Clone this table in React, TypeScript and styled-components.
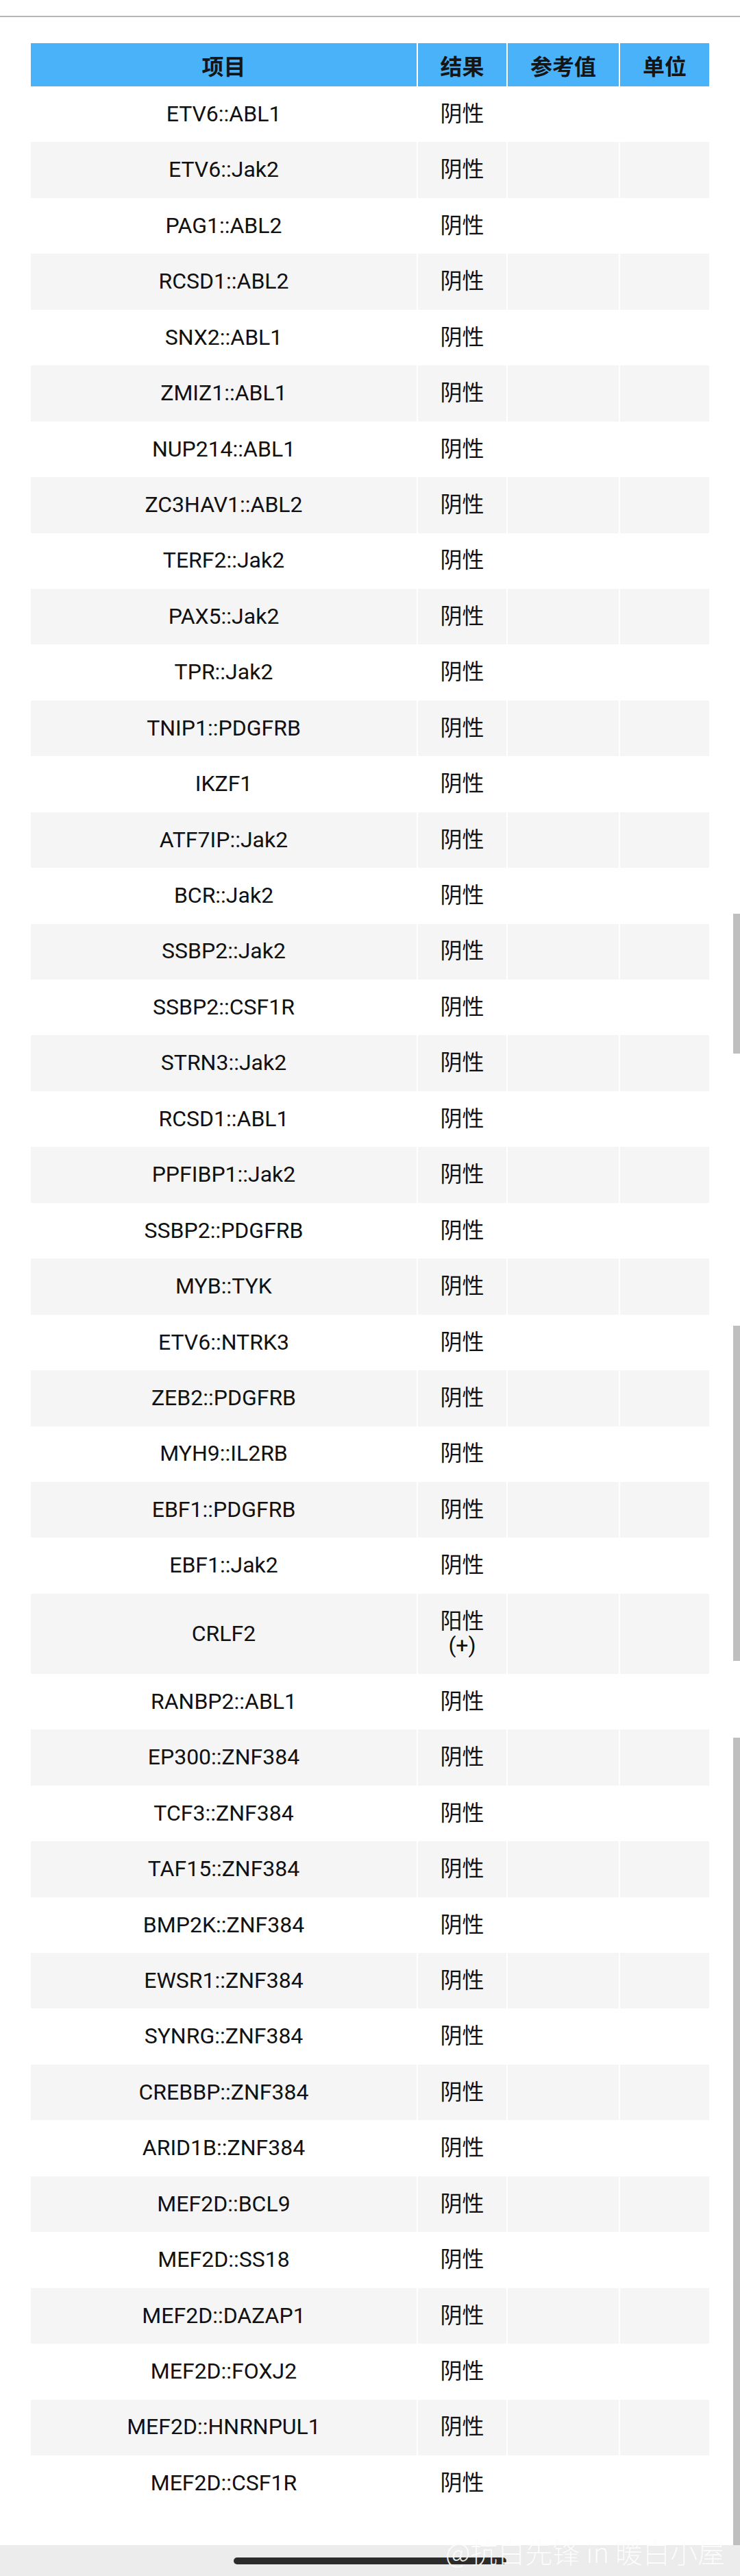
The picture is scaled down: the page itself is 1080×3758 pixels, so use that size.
import styled, { createGlobalStyle } from "styled-components";

const GlobalStyle = createGlobalStyle`
  html, body {
    margin: 0;
    padding: 0;
    background: #ffffff;
  }
  body {
    font-family: Roboto, "Noto Sans CJK SC", sans-serif;
  }
`;

const rows: [string, string][] = [
  ["ETV6::ABL1", "阴性"],
  ["ETV6::Jak2", "阴性"],
  ["PAG1::ABL2", "阴性"],
  ["RCSD1::ABL2", "阴性"],
  ["SNX2::ABL1", "阴性"],
  ["ZMIZ1::ABL1", "阴性"],
  ["NUP214::ABL1", "阴性"],
  ["ZC3HAV1::ABL2", "阴性"],
  ["TERF2::Jak2", "阴性"],
  ["PAX5::Jak2", "阴性"],
  ["TPR::Jak2", "阴性"],
  ["TNIP1::PDGFRB", "阴性"],
  ["IKZF1", "阴性"],
  ["ATF7IP::Jak2", "阴性"],
  ["BCR::Jak2", "阴性"],
  ["SSBP2::Jak2", "阴性"],
  ["SSBP2::CSF1R", "阴性"],
  ["STRN3::Jak2", "阴性"],
  ["RCSD1::ABL1", "阴性"],
  ["PPFIBP1::Jak2", "阴性"],
  ["SSBP2::PDGFRB", "阴性"],
  ["MYB::TYK", "阴性"],
  ["ETV6::NTRK3", "阴性"],
  ["ZEB2::PDGFRB", "阴性"],
  ["MYH9::IL2RB", "阴性"],
  ["EBF1::PDGFRB", "阴性"],
  ["EBF1::Jak2", "阴性"],
  ["CRLF2", "阳性|(+)"],
  ["RANBP2::ABL1", "阴性"],
  ["EP300::ZNF384", "阴性"],
  ["TCF3::ZNF384", "阴性"],
  ["TAF15::ZNF384", "阴性"],
  ["BMP2K::ZNF384", "阴性"],
  ["EWSR1::ZNF384", "阴性"],
  ["SYNRG::ZNF384", "阴性"],
  ["CREBBP::ZNF384", "阴性"],
  ["ARID1B::ZNF384", "阴性"],
  ["MEF2D::BCL9", "阴性"],
  ["MEF2D::SS18", "阴性"],
  ["MEF2D::DAZAP1", "阴性"],
  ["MEF2D::FOXJ2", "阴性"],
  ["MEF2D::HNRNPUL1", "阴性"],
  ["MEF2D::CSF1R", "阴性"],
];

const scrollMarks = [
  { top: 1333, height: 204 },
  { top: 1934, height: 489 },
  { top: 2535, height: 1178 },
];

const Page = styled.div`
  position: relative;
  min-height: 3758px;
  display: flex;
  flex-direction: column;
  overflow: hidden;
`;

const TopArea = styled.div`
  height: 23px;
  border-bottom: 2px solid #b7b7b7;
`;

const Content = styled.div`
  flex: 1;
  padding: 38px 45px 0 45px;
`;

const Table = styled.div`
  display: grid;
  grid-template-columns: 563px 129px 162px 130px;
  column-gap: 2px;
  width: 990px;
`;

const HeadCell = styled.div`
  background: #49b2f8;
  height: 63px;
  display: flex;
  align-items: center;
  justify-content: center;
  font-family: Roboto, "Noto Sans CJK SC", sans-serif;
  font-weight: 700;
  font-size: 32px;
  color: #151515;
`;

const Cell = styled.div<{ $alt: boolean }>`
  background: ${(p) => (p.$alt ? "#f5f5f5" : "#ffffff")};
  padding: 22.93px 6px;
  line-height: 35.6px;
  font-size: 32px;
  color: #111111;
  display: flex;
  flex-direction: column;
  align-items: center;
  justify-content: center;
  text-align: center;
`;

const NavBar = styled.div`
  height: 45px;
  background: #ececec;
  display: flex;
  justify-content: center;
  padding-top: 18px;
  box-sizing: border-box;
`;

const HomePill = styled.div`
  width: 398px;
  height: 10px;
  border-radius: 5px;
  background: #2c2c2c;
`;

const Watermark = styled.div`
  position: absolute;
  right: 22px;
  bottom: 14px;
  font-family: "Noto Sans CJK SC", sans-serif;
  font-weight: 300;
  font-size: 40px;
  line-height: 44px;
  color: rgba(255, 255, 255, 0.92);
  text-shadow: 0 0 1px rgba(0, 0, 0, 0.04);
  white-space: nowrap;
`;

const ScrollMark = styled.div`
  position: absolute;
  right: 0;
  width: 10px;
  background: #bfbfbf;
`;

export default function App() {
  return (
    <>
      <GlobalStyle />
      <Page>
        <TopArea />
        <Content>
          <Table>
            <HeadCell>项目</HeadCell>
            <HeadCell>结果</HeadCell>
            <HeadCell>参考值</HeadCell>
            <HeadCell>单位</HeadCell>
            {rows.map(([name, result], i) => {
              const alt = i % 2 === 1;
              return [
                <Cell key={name + "-n"} $alt={alt}>{name}</Cell>,
                <Cell key={name + "-r"} $alt={alt}>
                  {result.split("|").map((line) => (
                    <span key={line}>{line}</span>
                  ))}
                </Cell>,
                <Cell key={name + "-v"} $alt={alt} />,
                <Cell key={name + "-u"} $alt={alt} />,
              ];
            })}
          </Table>
        </Content>
        <NavBar>
          <HomePill />
        </NavBar>
        {scrollMarks.map((m) => (
          <ScrollMark key={m.top} style={{ top: m.top, height: m.height }} />
        ))}
        <Watermark>@抗白先锋 in 暖白小屋</Watermark>
      </Page>
    </>
  );
}
